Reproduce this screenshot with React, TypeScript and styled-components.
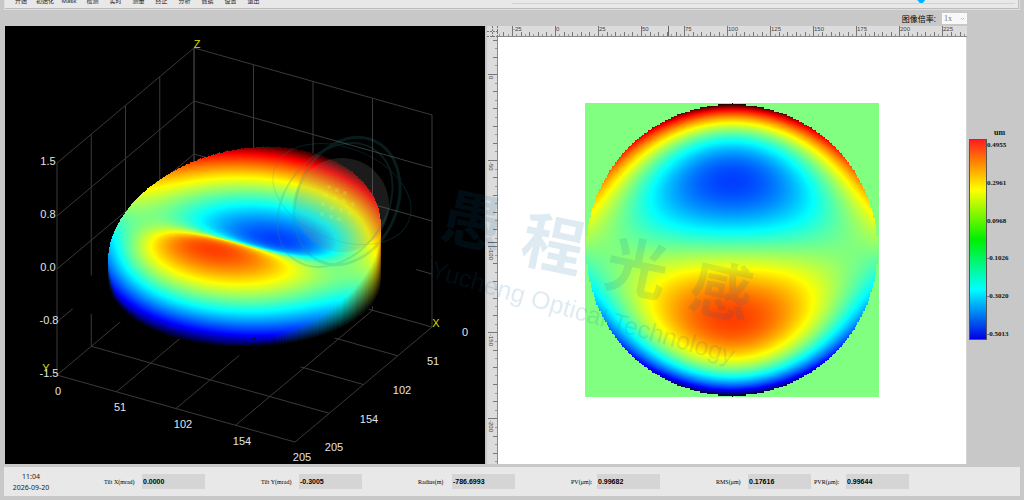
import React, { useEffect, useRef } from "react";
import styled, { createGlobalStyle } from "styled-components";

const GlobalStyle = createGlobalStyle`
  * { box-sizing: border-box; }
  body {
    margin: 0;
    background: #c8c8c8;
    color: #222;
    font-family: "Noto Sans", "Noto Sans CJK SC", sans-serif;
  }
`;

/* ---------- page frame ---------- */

const Page = styled.div`
  display: flex;
  flex-direction: column;
  min-height: 100vh;
  overflow: hidden;
`;

const Toolbar = styled.header`
  display: flex;
  align-items: flex-start;
  height: 10px;
  margin: 0 4px;
  overflow: hidden;
  background: #e8e8e8;
  border: solid #dedede;
  border-width: 0 1px 1px;
  box-shadow: inset -1px -1px 0 #bcbcbc;
`;

const Menu = styled.nav`
  display: flex;
  flex: 1;
  margin-top: -4px;
  padding-left: 4px;
`;

const MenuButton = styled.button<{ $wide?: boolean }>`
  display: flex;
  justify-content: center;
  width: ${(p) => (p.$wide ? 24 : 23)}px;
  padding: 0;
  border: 0;
  background: none;
  color: #222;
  font: 6px/10px "Noto Sans", "Noto Sans CJK SC", sans-serif;
  white-space: nowrap;
`;

const SliderArea = styled.div`
  flex: 1;
  height: 4px;
  margin-right: 4px;
  border-bottom: 1px solid #d2d2d2;
`;

const Slider = styled.input`
  display: block;
  appearance: none;
  width: 100%;
  height: 12px;
  margin: -9px 0 0;
  background: none;
  &::-webkit-slider-thumb {
    appearance: none;
    width: 10px;
    height: 12px;
    background: #00b4ff;
    clip-path: polygon(0 0, 100% 0, 100% 65%, 65% 100%, 35% 100%, 0 65%);
  }
`;

const OptionsRow = styled.div`
  display: flex;
  align-items: center;
  justify-content: flex-end;
  gap: 6px;
  height: 16px;
  padding: 1px 57px 0 0;
`;

const OptionLabel = styled.label`
  font: 8px/12px "Noto Sans", "Noto Sans CJK SC", sans-serif;
  color: #000;
`;

const SelectWrap = styled.div`
  position: relative;
  display: flex;
  svg {
    position: absolute;
    right: 2px;
    top: 4px;
    pointer-events: none;
  }
`;

const Select = styled.select`
  appearance: none;
  width: 25px;
  height: 11px;
  padding: 0 2px;
  border: 0;
  background: #f8f8f8;
  color: #777;
  font: 8px/11px "Liberation Serif", serif;
`;

/* ---------- workspace ---------- */

const Workspace = styled.main`
  position: relative;
  display: grid;
  grid-template-columns: minmax(0, 1fr) minmax(0, 1fr) 57px;
  column-gap: 2px;
  flex: 1;
  padding-left: 5px;
  margin-right: -2px;
`;

const Surface = styled.section`
  display: flex;
  align-items: center;
  justify-content: center;
  min-height: 438px;
  overflow: hidden;
  background: #000;
`;

const Stage = styled.div`
  position: relative;
  flex: none;
  svg, canvas { display: block; }
  canvas { position: absolute; inset: 0; }
`;

const MapPanel = styled.section`
  display: grid;
  grid-template-columns: 11px minmax(0, 1fr);
  grid-template-rows: 11px minmax(0, 1fr);
  background: #dcdcdc;
`;

const RulerSvg = styled.svg`
  display: block;
  width: 100%;
  height: 100%;
  overflow: hidden;
  font: 6px "Liberation Sans", sans-serif;
  fill: #444;
`;

const MapArea = styled.div`
  display: flex;
  align-items: center;
  justify-content: center;
  padding-bottom: 2px;
  background: #fff;
  border-right: 1px solid #d4d4d4;
`;

const Scale = styled.aside`
  display: grid;
  grid-template-columns: 18px 1fr;
  grid-template-rows: 12px 201px;
  align-content: start;
  padding-top: 101px;
  color: #111;
  font: bold 7px/12px "Liberation Serif", serif;
`;

const Unit = styled.div`
  grid-column: 2;
  padding-left: 7px;
  font-size: 8px;
`;

const ScaleBar = styled.div`
  border: 1px solid #555;
  background: linear-gradient(#ff1e1e, #ff8c00 12%, #ffff00 25%, #00f000 50%, #00ffff 75%, #0000e6);
`;

const ScaleLabels = styled.div`
  display: flex;
  flex-direction: column;
  justify-content: space-between;
`;

const Watermark = styled.svg`
  position: absolute;
  inset: 0;
  width: 100%;
  height: 100%;
  pointer-events: none;
`;

/* ---------- status bar ---------- */

const StatusBar = styled.footer`
  display: flex;
  align-items: center;
  height: 29px;
  margin: 3px 4px 4px;
  background: #e8e8e8;
`;

const Clock = styled.div`
  width: 54px;
  margin-right: 46px;
  text-align: center;
  font: 7px/11px "Noto Sans", sans-serif;
`;

const Field = styled.div<{ $span: number }>`
  display: flex;
  align-items: center;
  flex: ${(p) => p.$span} 1 0;
`;

const FieldLabel = styled.label<{ $w: number }>`
  width: ${(p) => p.$w}px;
  color: #000;
  font: 6px/8px "Liberation Serif", serif;
  white-space: nowrap;
`;

const FieldValue = styled.input`
  width: 63px;
  height: 15px;
  padding: 0 1px;
  border: 0;
  background: #d5d5d5;
  color: #000;
  font: bold 7px/15px "Liberation Sans", sans-serif;
`;

/* ---------- wavefront maths ---------- */

const CELLS = 205;
const RADIUS = 0.495;

/** Primary coma over the unit pupil; `s` points to the bottom of the map. */
const coma = (c: number, s: number) => {
  const r2 = c * c + s * s;
  return -(3 * r2 - 2) * s;
};

const clamp = (n: number) => Math.max(0, Math.min(1, n));

const jet = (value: number): [number, number, number] => {
  const over = Math.max(0, Math.abs(value) - 0.75);
  const v = value + Math.sign(value) * over * 0.6;
  return [
    255 * clamp(1.5 - Math.abs(2 * v - 1)),
    255 * clamp(1.5 - Math.abs(2 * v)),
    255 * clamp(1.5 - Math.abs(2 * v + 1)),
  ];
};

/** Pupil mask, decided per measured cell so that the rim is stepped. */
const inPupil = (a: number, b: number) => {
  const c = ((Math.floor(a * CELLS) + 0.5) / CELLS - 0.5) / RADIUS;
  const s = ((Math.floor(b * CELLS) + 0.5) / CELLS - 0.5) / RADIUS;
  return c * c + s * s <= 1;
};

function HeatMap() {
  const ref = useRef<HTMLCanvasElement>(null);
  useEffect(() => {
    const ctx = ref.current!.getContext("2d")!;
    const img = ctx.createImageData(294, 294);
    for (let y = 0; y < 294; y++) {
      for (let x = 0; x < 294; x++) {
        const a = (x + 0.5) / 294;
        const b = (y + 0.5) / 294;
        let rgb: [number, number, number] = [128, 255, 128];
        if (inPupil(a, b)) rgb = jet(coma((a - 0.5) / RADIUS, (b - 0.5) / RADIUS));
        else if (x === 147 && (y < 3 || y > 290)) rgb = [0, 0, 0];
        img.data.set([...rgb, 255], (y * 294 + x) * 4);
      }
    }
    ctx.putImageData(img, 0, 0);
  }, []);
  return <canvas ref={ref} width={294} height={294} aria-label="Wavefront map" />;
}

/* Orthographic axes of the plot box, in stage pixels. */
type Pt = [number, number];
const project = (a: number, b: number, z: number): Pt => [
  189 + 238 * a - 137 * b,
  128 + 67 * a + 115 * b - 70.7 * z,
];

function SurfacePlot() {
  const ref = useRef<HTMLCanvasElement>(null);
  useEffect(() => {
    const W = 480;
    const H = 438;
    const ctx = ref.current!.getContext("2d")!;
    const img = ctx.createImageData(W, H);
    const put = (x: number, y: number, rgb: number[], k = 1) => {
      const o = (Math.floor(y) * W + Math.floor(x)) * 4;
      img.data[o] = rgb[0] * k;
      img.data[o + 1] = rgb[1] * k;
      img.data[o + 2] = rgb[2] * k;
      img.data[o + 3] = 255;
    };
    const wall = (front: boolean) => {
      for (let t = 0; t < 4000; t++) {
        const ang = (t / 4000) * Math.PI * 2;
        const c = Math.cos(ang);
        const s = Math.sin(ang);
        if (137 * c + 238 * s > 0 !== front) continue;
        const v = coma(c, s);
        const a = 0.5 + RADIUS * c;
        const b = 0.5 + RADIUS * s;
        const [x, top] = project(a, b, v * 0.49);
        const bottom = project(a, b, -0.5)[1];
        const rgb = jet(v);
        for (let y = top; y <= bottom; y++) put(x, y, rgb, 1 - (y - top) / (bottom - top + 1));
      }
    };
    wall(false);
    const N = CELLS * 4;
    for (let j = 0; j < N; j++) {
      for (let i = 0; i < N; i++) {
        const a = (i + 0.5) / N;
        const b = (j + 0.5) / N;
        if (!inPupil(a, b)) continue;
        const v = coma((a - 0.5) / RADIUS, (b - 0.5) / RADIUS);
        const [x, y] = project(a, b, v * 0.49);
        put(x, y, jet(v));
      }
    }
    wall(true);
    ctx.putImageData(img, 0, 0);
  }, []);

  const seg = (p: Pt, q: Pt, key: string) => (
    <line key={key} x1={p[0]} y1={p[1]} x2={q[0]} y2={q[1]} />
  );
  const grid: React.ReactNode[] = [];
  [0, 0.25, 0.5, 0.75, 1].forEach((t) => {
    const z = 1.5 - 3 * t;
    grid.push(seg(project(t, 0, -1.5), project(t, 0, 1.5), "xv" + t));
    grid.push(seg(project(0, t, -1.5), project(0, t, 1.5), "yv" + t));
    if (t < 1) {
      grid.push(seg(project(0, 0, z), project(1, 0, z), "xh" + t));
      grid.push(seg(project(0, 0, z), project(0, 1, z), "yh" + t));
    }
    grid.push(seg(project(t, 0, -1.5), project(t, 1, -1.5), "fx" + t));
    grid.push(seg(project(0, t, -1.5), project(1, t, -1.5), "fy" + t));
  });
  const floor = [project(0, 0, -0.5), project(1, 0, -0.5), project(1, 1, -0.5), project(0, 1, -0.5)];
  const ticks: [number, number, string][] = [
    [43, 139, "1.5"], [43, 192, "0.8"], [43, 245, "0.0"], [44, 298, "-0.8"], [44, 351, "-1.5"],
    [53, 369, "0"], [115, 385, "51"], [178, 402, "102"], [237, 419, "154"], [297, 435, "205"],
    [460, 310, "0"], [428, 339, "51"], [397, 368, "102"], [364, 397, "154"], [329, 425, "205"],
  ];
  return (
    <Stage>
      <svg width="480" height="438" fontFamily="Liberation Sans, sans-serif" fontSize="11">
        <g stroke="#3a3a3a" strokeWidth="1">{grid}</g>
        <polygon points={floor.map((p) => p.join(",")).join(" ")} fill="#000" />
        <g fill="#e4e4e4" textAnchor="middle">
          {ticks.map(([x, y, t], i) => <text key={i} x={x} y={y}>{t}</text>)}
        </g>
        <g fill="#d8d800" textAnchor="middle">
          <text x="192" y="22">Z</text>
          <text x="431" y="301">X</text>
          <text x="41" y="346">Y</text>
        </g>
      </svg>
      <canvas ref={ref} width={480} height={438} aria-label="3D surface" />
    </Stage>
  );
}

/* ---------- rulers ---------- */

const UNIT = 1.722;

function TopRuler() {
  const marks: React.ReactNode[] = [];
  for (let k = -14; k <= 96; k++) {
    const x = Math.round(57 + k * 2.5 * UNIT);
    const major = k % 10 === 0;
    marks.push(
      <rect key={k} x={x} y={major ? 0 : k % 2 ? 8 : 6} width="1" height="11" fill={k % 2 ? "#999" : "#777"} />
    );
    if (major) marks.push(<text key={"t" + k} x={x + 1} y="5">{k * 2.5}</text>);
  }
  return (
    <RulerSvg>
      {marks}
      <rect x="170" y="0" width="1" height="11" fill="#666" />
      <rect x="0" y="10" width="100%" height="1" fill="#888" />
    </RulerSvg>
  );
}

function SideRuler() {
  const marks: React.ReactNode[] = [];
  for (let k = -4; k <= 45; k++) {
    const y = Math.round(37 + k * 5 * UNIT);
    const major = k % 10 === 0;
    marks.push(
      <rect key={k} x={major ? 1 : k % 2 ? 8 : 6} y={y} width="10" height="1" fill={k % 2 ? "#999" : "#777"} />
    );
    if (major) {
      marks.push(
        <text key={"t" + k} transform={`translate(2 ${y + 2}) rotate(90)`}>{k === 0 ? "0" : -k * 5}</text>
      );
    }
  }
  return (
    <RulerSvg>
      {marks}
      <rect x="1" y="205" width="10" height="1" fill="#666" />
      <rect x="10" y="0" width="1" height="100%" fill="#888" />
    </RulerSvg>
  );
}

function RulerCorner() {
  return (
    <RulerSvg>
      <path d="M0 5.5H11M0 10.5H11M5.5 0V11M10.5 0V11" stroke="#777" strokeDasharray="2 1" fill="none" />
    </RulerSvg>
  );
}

/* ---------- watermark ---------- */

const brand: [number, number, string][] = [
  [473, 195, "愚"], [553, 218, "程"], [637, 242, "光"], [721, 265, "感"],
];

const dots: Pt[] = [
  [329, 161], [337, 164], [345, 167], [326, 169], [335, 172], [344, 175], [353, 178],
  [323, 178], [332, 182], [341, 184], [350, 187], [322, 188], [331, 191], [339, 193],
];

function BrandMark() {
  return (
    <Watermark>
      <circle cx="342" cy="179" r="47" fill="#888" opacity="0.2" />
      <g fill="none" stroke="#2c8c8c" opacity="0.2">
        <ellipse cx="335" cy="179" rx="50" ry="68" strokeWidth="2" transform="rotate(38 335 179)" />
        <ellipse cx="347" cy="175" rx="50" ry="66" strokeWidth="3" transform="rotate(24 347 175)" />
        <ellipse cx="342" cy="168" rx="72" ry="46" strokeWidth="1" transform="rotate(22 342 168)" />
      </g>
      <g fill="#e8ff60" opacity="0.2">
        {dots.map(([x, y]) => <circle key={`${x}-${y}`} cx={x} cy={y} r="2" />)}
      </g>
      <g fill="#0a64a0" opacity="0.13">
        <g fontFamily="Noto Sans CJK SC, sans-serif" fontWeight="700" fontSize="62" textAnchor="middle">
          {brand.map(([x, y, t]) => (
            <text key={t} transform={`translate(${x} ${y}) rotate(12)`} y="23">{t}</text>
          ))}
        </g>
        <text transform="translate(429 251) rotate(16)" fontFamily="Liberation Sans, sans-serif" fontSize="25">
          Yucheng Optical Technology
        </text>
      </g>
    </Watermark>
  );
}

/* ---------- app ---------- */

const menu = ["开始", "初始化", "Mask", "检测", "实时", "测量", "终止", "分析", "数据", "设置", "退出"];
const levels = ["0.4955", "0.2961", "0.0968", "-0.1026", "-0.3020", "-0.5013"];
const fields = [
  { id: "tx", label: "Tilt X(mrad)", value: "0.0000", w: 38, span: 157 },
  { id: "ty", label: "Tilt Y(mrad)", value: "-0.3005", w: 38, span: 157 },
  { id: "rad", label: "Radius(m)", value: "-786.6993", w: 34, span: 153 },
  { id: "pv", label: "PV(μm):", value: "0.99682", w: 26, span: 145 },
  { id: "rms", label: "RMS(μm)", value: "0.17616", w: 32, span: 98 },
  { id: "pvr", label: "PVR(μm):", value: "0.99644", w: 32, span: 206 },
];

export default function App() {
  return (
    <Page>
      <GlobalStyle />
      <Toolbar>
        <Menu>
          {menu.map((m, i) => <MenuButton key={m} $wide={i < 3}>{m}</MenuButton>)}
        </Menu>
        <SliderArea>
          <Slider type="range" min="0" max="100" defaultValue="82" aria-label="亮度" />
        </SliderArea>
      </Toolbar>
      <OptionsRow>
        <OptionLabel htmlFor="zoom">图像倍率:</OptionLabel>
        <SelectWrap>
          <Select id="zoom" defaultValue="1x"><option>1x</option></Select>
          <svg width="5" height="4" viewBox="0 0 5 4"><path d="M1 1l1.5 1.5L4 1" fill="none" stroke="#bbb" /></svg>
        </SelectWrap>
      </OptionsRow>
      <Workspace>
        <Surface><SurfacePlot /></Surface>
        <MapPanel>
          <RulerCorner />
          <TopRuler />
          <SideRuler />
          <MapArea><HeatMap /></MapArea>
        </MapPanel>
        <Scale>
          <Unit>um</Unit>
          <ScaleBar />
          <ScaleLabels>{levels.map((l) => <span key={l}>{l}</span>)}</ScaleLabels>
        </Scale>
        <BrandMark />
      </Workspace>
      <StatusBar>
        <Clock>
          <div>11:04</div>
          <div>2026-09-20</div>
        </Clock>
        {fields.map((f) => (
          <Field key={f.id} $span={f.span}>
            <FieldLabel htmlFor={f.id} $w={f.w}>{f.label}</FieldLabel>
            <FieldValue id={f.id} defaultValue={f.value} readOnly />
          </Field>
        ))}
      </StatusBar>
    </Page>
  );
}
